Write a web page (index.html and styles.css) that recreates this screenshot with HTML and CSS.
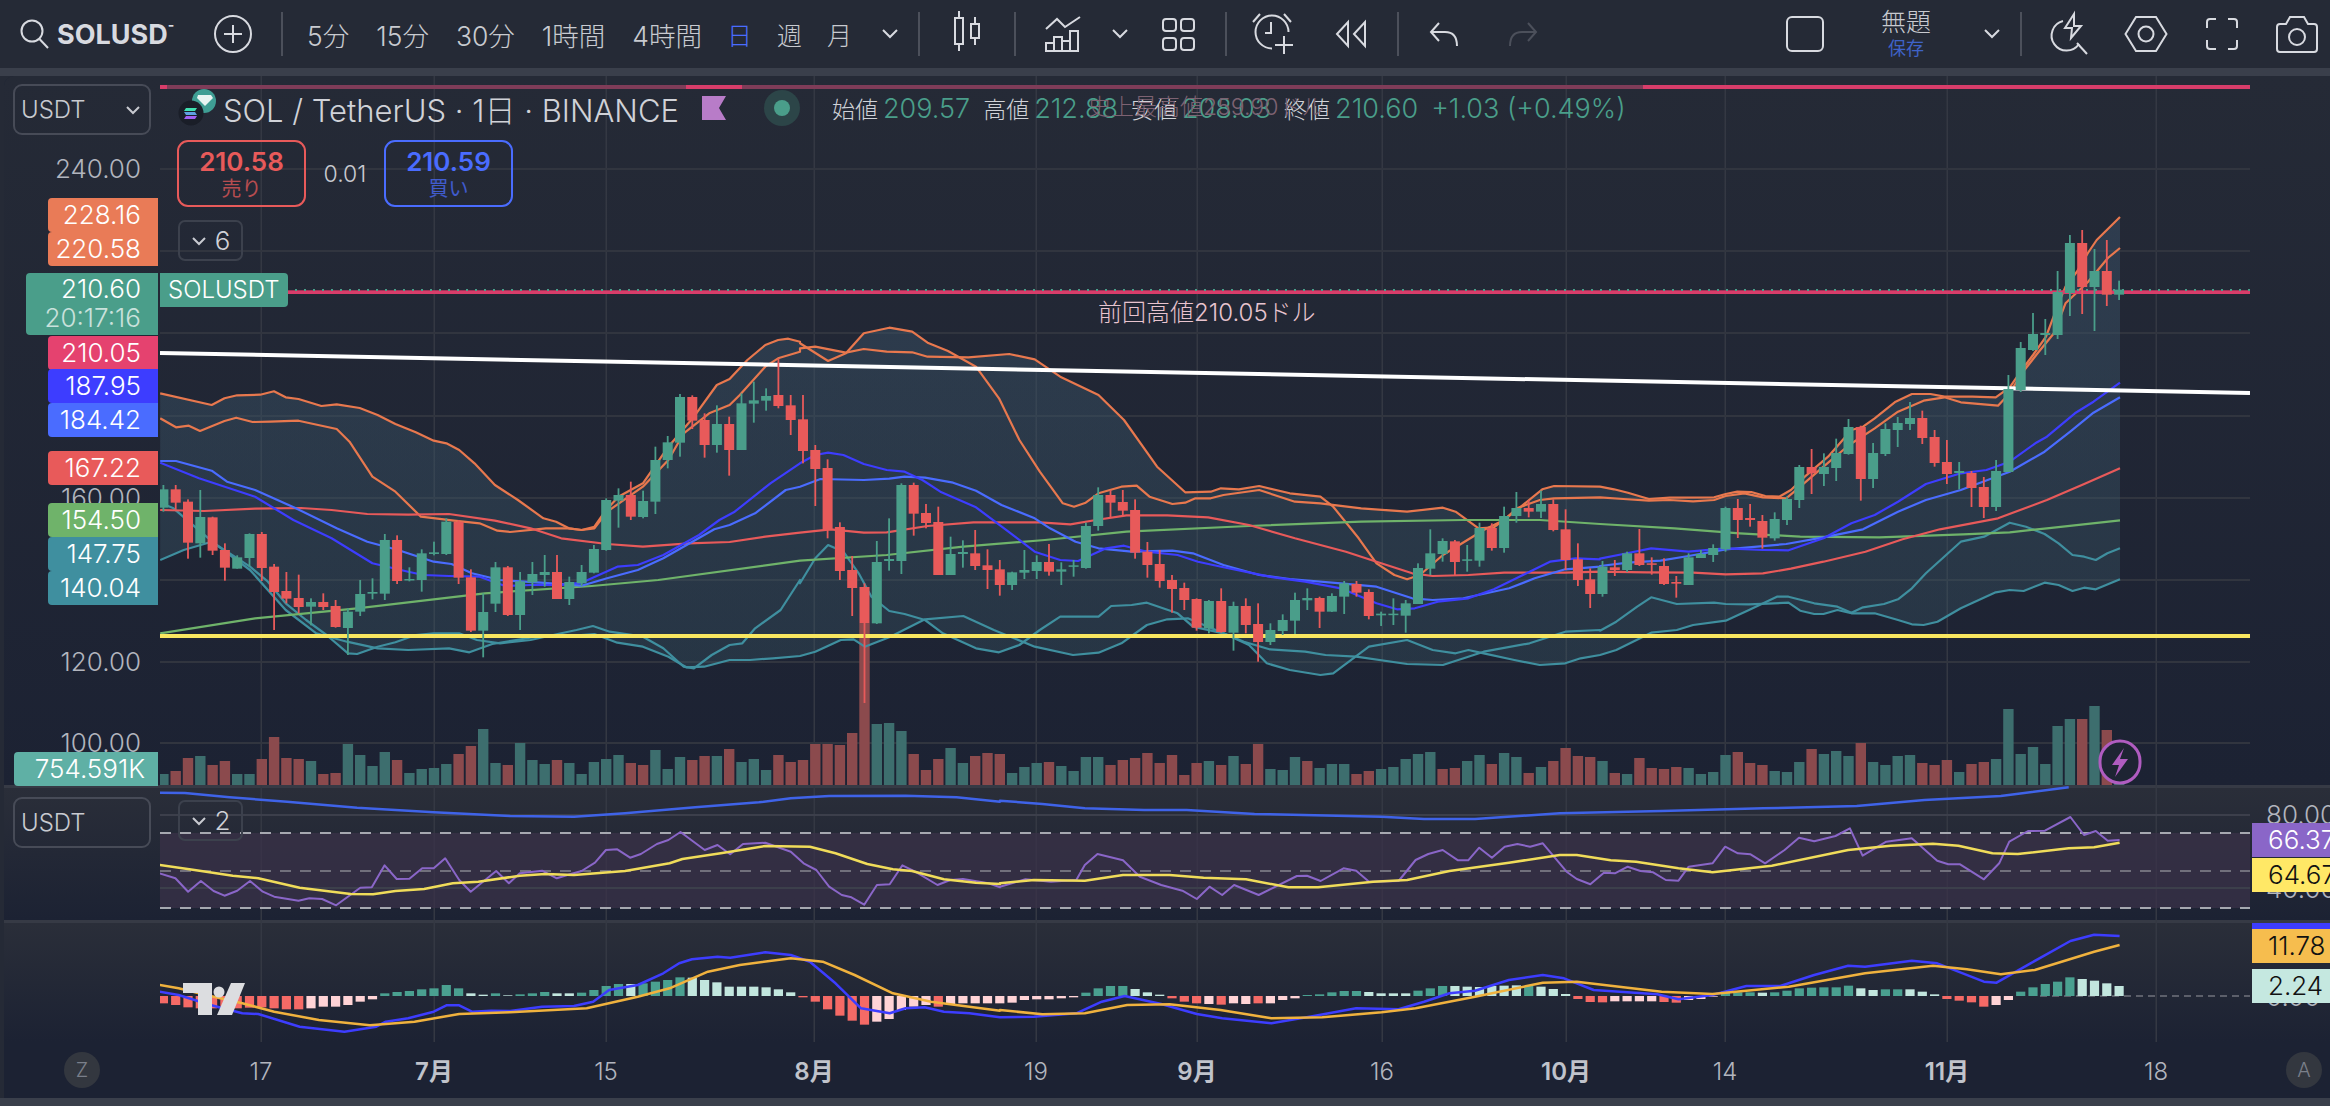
FILE: index.html
```html
<!DOCTYPE html>
<html lang="ja">
<head>
<meta charset="utf-8">
<title>SOLUSD</title>
<link rel="stylesheet" href="styles.css">
</head>
<body>
<div class="app">
  <header class="toolbar">
    <svg class="ico m-20" width="30" height="34" viewBox="0 0 30 34"><circle cx="12" cy="14" r="10.5"/><path d="M19.5 22 L28 31"/></svg>
    <div class="symbol">SOLUSD<span class="sup">-</span></div>
    <svg class="ico m-38" width="38" height="38" viewBox="0 0 38 38"><circle cx="19" cy="19" r="18"/><path d="M19 10V28M10 19H28"/></svg>
    <span class="divider m-29"></span>
    <nav class="intervals">
      <span>5分</span><span>15分</span><span>30分</span><span>1時間</span><span>4時間</span><span class="single active">日</span><span class="single">週</span><span class="single">月</span>
    </nav>
    <svg class="ico chev m-28" width="20" height="12" viewBox="0 0 20 12"><path d="M3 2 L10 9 L17 2"/></svg>
    <span class="divider m-18"></span>
    <svg class="ico m-30" width="36" height="50" viewBox="0 0 36 50"><path d="M9 2V9M9 35V42M25 8V15M25 29V36"/><rect x="5" y="9" width="8" height="26"/><rect x="21" y="15" width="8" height="14"/></svg>
    <span class="divider m-28"></span>
    <svg class="ico m-29" width="37" height="40" viewBox="0 0 37 40"><path d="M1 15L12 5L20 13L35 3"/><path d="M1 37V29H9V37ZM9 37V23H17V37ZM17 37V27H25V37ZM25 37V17H33V37Z"/></svg>
    <svg class="ico chev m-28" width="20" height="12" viewBox="0 0 20 12"><path d="M3 2 L10 9 L17 2"/></svg>
    <svg class="ico m-32" width="33" height="33" viewBox="0 0 33 33"><rect x="1" y="1" width="13" height="12" rx="3"/><rect x="19" y="1" width="13" height="12" rx="3"/><rect x="1" y="20" width="13" height="12" rx="3"/><rect x="19" y="20" width="13" height="12" rx="3"/></svg>
    <span class="divider m-30"></span>
    <svg class="ico m-24" width="44" height="48" viewBox="0 0 44 48"><path d="M21 38.5A16.5 16.5 0 1 1 37.5 22"/><path d="M20 12V23H14"/><path d="M33 26V44M24 35H42"/><path d="M2 12L9 4M33 4L40 12"/></svg>
    <svg class="ico m-41" width="30" height="26" viewBox="0 0 30 26"><path d="M1 13L12 1V25ZM18 13L29 1V25Z"/></svg>
    <span class="divider m-31"></span>
    <svg class="ico m-30" width="30" height="26" viewBox="0 0 30 26"><path d="M10 2L2 11L10 20"/><path d="M2 11H16Q28 11 28 25"/></svg>
    <svg class="ico dim m-49" width="30" height="26" viewBox="0 0 30 26"><path d="M20 2L28 11L20 20"/><path d="M28 11H14Q2 11 2 25"/></svg>

    <div class="toolbar-right">
      <svg class="ico" width="38" height="36" viewBox="0 0 38 36"><rect x="1" y="1" width="36" height="34" rx="5"/></svg>
      <div class="layout-name"><span class="layout-title">無題</span><span class="layout-save">保存</span></div>
      <svg class="ico chev m-40" width="20" height="12" viewBox="0 0 20 12"><path d="M3 2 L10 9 L17 2"/></svg>
      <span class="divider m-18"></span>
      <svg class="ico m-28" width="38" height="46" viewBox="0 0 38 46"><path d="M24 3L15 17H22L21 27L31 15H24Z"/><path d="M13 10A15 15 0 1 0 29 33"/><path d="M27 32L37 43"/></svg>
      <svg class="ico m-36" width="44" height="40" viewBox="0 0 44 40"><path d="M1.5 20L12 3H32L42.5 20L32 37H12Z"/><circle cx="22" cy="20" r="7.5"/></svg>
      <svg class="ico m-38" width="32" height="32" viewBox="0 0 32 32"><path d="M1 10V4Q1 1 4 1H10M22 1H28Q31 1 31 4V10M31 22V28Q31 31 28 31H22M10 31H4Q1 31 1 28V22"/></svg>
      <svg class="ico m-38" width="42" height="40" viewBox="0 0 42 40"><path d="M1 13a3 3 0 0 1 3-3H10L14 3H28L32 10H38a3 3 0 0 1 3 3V35a3 3 0 0 1-3 3H4a3 3 0 0 1-3-3Z"/><circle cx="21" cy="23" r="8"/></svg>
    </div>
  </header>

  <div class="band"></div>

  <main class="chart" id="chart">
    <section class="pane pane-main">
      <div class="axis-cell">
        <div class="select">USDT<svg class="sel-chev" width="16" height="10" viewBox="0 0 16 10"><path d="M2 2L8 8L14 2"/></svg></div>
      </div>
      <div class="plot-cell">
        <div class="legend">
          <div class="logo">
            <svg width="40" height="38" viewBox="0 0 40 38">
              <circle cx="26" cy="12" r="12" fill="#3f9e94"/>
              <path d="M20 6H33L35 9L27 17L19 9Z" fill="#e8f4f2"/>
              <circle cx="13" cy="24" r="12.5" fill="#1a1e28"/>
              <path d="M8 19H19L17 22H6Z" fill="#3fe0b0"/>
              <path d="M6 23H17L19 26H8Z" fill="#5fa0e0"/>
              <path d="M8 27H19L17 30H6Z" fill="#a060f0"/>
            </svg>
          </div>
          <span class="title">SOL / TetherUS · 1日 · BINANCE</span>
          <svg class="flag" width="24" height="24" viewBox="0 0 24 24"><path d="M0 0H24L17 12L24 24H0Z"/></svg>
          <svg class="pulse" width="36" height="36" viewBox="0 0 36 36"><circle cx="18" cy="18" r="18" fill="#2c4548"/><circle cx="18" cy="18" r="8" fill="#4a9e8a"/></svg>
          <div class="ohlc">
            <span class="lbl">始値</span><span class="val">209.57</span>
            <span class="lbl">高値</span><span class="val">212.88</span>
            <span class="lbl">安値</span><span class="val">208.03</span>
            <span class="lbl">終値</span><span class="val">210.60</span>
            <span class="val">+1.03 (+0.49%)</span>
          </div>
          <span class="ghost">史上最高値259.90ドル</span>
        </div>
        <div class="orders">
          <div class="order sell"><b>210.58</b><span>売り</span></div>
          <span class="spread">0.01</span>
          <div class="order buy"><b>210.59</b><span>買い</span></div>
        </div>
        <div class="collapse"><svg width="16" height="10" viewBox="0 0 16 10"><path d="M2 2L8 8L14 2"/></svg>6</div>
      </div>
      <div class="right-cell"></div>
    </section>

    <section class="pane pane-rsi">
      <div class="axis-cell">
        <div class="select">USDT</div>
      </div>
      <div class="plot-cell">
        <div class="collapse"><svg width="16" height="10" viewBox="0 0 16 10"><path d="M2 2L8 8L14 2"/></svg>2</div>
      </div>
      <div class="right-cell"></div>
    </section>

    <section class="pane pane-macd">
      <div class="axis-cell"></div>
      <div class="plot-cell"></div>
      <div class="right-cell"></div>
    </section>

    <footer class="time-axis">
      <span class="badge">Z</span>
      <span class="badge">A</span>
    </footer>

    <svg class="canvas" id="canvas" width="2090" height="966" viewBox="160 76 2090 966"></svg>
    <div class="overlay" id="overlay"></div>
  </main>

  <div class="band"></div>
</div>
<script src="chart.js"></script>
</body>
</html>
```
FILE: styles.css
```css
* { box-sizing: border-box; }
html, body { margin: 0; padding: 0; }
body {
  background: #252a36;
  color: #d8dae0;
  font-family: Inter, "Noto Sans CJK JP", sans-serif;
  overflow: hidden;
}
.app { width: 2330px; height: 1106px; display: flex; flex-direction: column; }

/* Toolbar */
.toolbar { height: 68px; display: flex; align-items: center; padding-right: 12px; background: #252a36; flex: none; }
.ico { fill: none; stroke: #d8dae0; stroke-width: 2; flex: none; overflow: visible; }
.ico.dim { stroke: #4c505b; }
.m-18 { margin-left: 18px; }
.m-20 { margin-left: 20px; }
.m-24 { margin-left: 24px; }
.m-28 { margin-left: 28px; }
.m-29 { margin-left: 29px; }
.m-30 { margin-left: 30px; }
.m-31 { margin-left: 31px; }
.m-32 { margin-left: 32px; }
.m-36 { margin-left: 36px; }
.m-38 { margin-left: 38px; }
.m-40 { margin-left: 40px; }
.m-41 { margin-left: 41px; }
.m-49 { margin-left: 49px; }
.symbol { margin-left: 7px; font-size: 27px; font-weight: 700; color: #d8dae0; width: 119px; white-space: nowrap; display: flex; align-items: flex-start; }
.sup { font-size: 14px; line-height: 14px; }
.divider { width: 2px; height: 44px; background: #4c505b; flex: none; }
.intervals { margin-left: 24px; width: 545px; display: flex; align-items: center; gap: 27px; font-size: 26.5px; color: #c8cad0; white-space: nowrap; font-weight: 300; }
.intervals .single { font-size: 25px; margin-left: -2px; }
.intervals .active { color: #4a6cff; }
.toolbar-right { margin-left: auto; display: flex; align-items: center; }
.layout-name { width: 72px; margin-left: 46px; display: flex; flex-direction: column; align-items: center; color: #c8cad0; }
.layout-title { font-size: 25px; line-height: 30px; font-weight: 300; }
.layout-save { font-size: 18px; line-height: 24px; color: #3f63c8; }

.band { height: 8px; background: #3a3f4b; flex: none; }

/* Chart */
.chart {
  position: relative;
  height: 1022px;
  margin-left: 4px;
  border-top-left-radius: 10px;
  overflow: hidden;
  background: #1c2233;
  flex: none;
}
.pane { display: grid; grid-template-columns: 156px 2090px 80px; }
.pane-main { height: 712px; background: linear-gradient(#252a36, #1c2233); border-bottom: 3px solid #363a45; }
.pane-rsi { height: 135px; background: linear-gradient(#2a2e39, #1c2233); border-bottom: 3px solid #363a45; }
.pane-macd { height: 119px; background: linear-gradient(#2a2e39, #1c2233); }
.axis-cell { padding: 8px 0 0 9px; }
.pane-rsi .axis-cell { padding-top: 9px; }
.select { width: 138px; height: 51px; border: 2px solid #474b57; border-radius: 9px; display: flex; align-items: center; justify-content: space-between; padding: 0 8px 0 6px; font-size: 24px; color: #c8cad0; font-weight: 300; }
.sel-chev, .collapse svg { fill: none; stroke: #c8cad0; stroke-width: 2; }
.plot-cell { position: relative; z-index: 2; padding: 14px 0 0 18px; }
.pane-rsi .plot-cell { padding-top: 12px; }

.legend { position: relative; height: 36px; display: flex; align-items: center; white-space: nowrap; }
.logo { width: 45px; height: 38px; flex: none; }
.title { font-size: 31px; color: #d0d2d8; font-weight: 300; width: 479px; flex: none; }
.flag { fill: #b87cc8; flex: none; }
.pulse { margin-left: 38px; flex: none; }
.ohlc { margin-left: 32px; display: flex; align-items: center; }
.lbl { font-size: 23px; color: #d0d2d8; font-weight: 300; margin-right: 5px; }
.val { font-size: 27px; color: #4a9e8a; margin-right: 13px; font-weight: 300; }
.ghost { position: absolute; left: 910px; top: -2px; font-size: 23px; color: #7d6272; font-weight: 300; }

.orders { margin-top: 14px; display: flex; align-items: center; height: 67px; }
.order { width: 129px; height: 67px; border: 2px solid; border-radius: 11px; display: flex; flex-direction: column; align-items: center; justify-content: center; }
.order b { font-size: 26px; line-height: 30px; font-weight: 600; }
.order span { font-size: 20px; line-height: 24px; opacity: .75; }
.sell { border-color: #e85a5a; color: #e85a5a; margin-left: -1px; }
.buy { border-color: #4a6cff; color: #4a6cff; }
.spread { width: 78px; text-align: center; font-size: 23px; color: #c8cad0; font-weight: 300; }
.collapse { width: 65px; height: 41px; margin-top: 13px; border: 2px solid #3c414d; border-radius: 7px; display: flex; align-items: center; justify-content: center; gap: 8px; font-size: 26px; color: #d0d2d8; font-weight: 300; }
.pane-rsi .collapse { margin-top: 0; }

.time-axis { height: 56px; display: flex; align-items: center; justify-content: space-between; padding: 0 8px 0 60px; }
.badge { width: 36px; height: 36px; border-radius: 50%; background: #33373f; color: #7a7f8a; font-size: 20px; display: flex; align-items: center; justify-content: center; font-weight: 300; }

.canvas { position: absolute; left: 156px; top: 0; overflow: hidden; z-index: 1; }
.overlay { position: absolute; left: 0; top: 0; width: 0; height: 0; z-index: 3; }

.ax, .tag, .time, .note { position: absolute; white-space: nowrap; font-size: 26px; font-weight: 300; }
.ax { color: #b2b5be; transform: translateY(-50%); line-height: 28px; }
.ax.left { width: 137px; text-align: right; left: 0; }
.ax.right { left: 2262px; }
.tag { height: 34px; line-height: 34px; color: #fff; padding-right: 17px; text-align: right; border-radius: 4px 0 0 4px; font-weight: 300; }
.tag.l { left: 44px; width: 110px; }
.tag.r { left: 2248px; width: 82px; padding: 0 0 0 16px; text-align: left; border-radius: 0; }
.tag.k { color: #111; }
.c-orange { background: #e97b57; }
.c-pink { background: #e5426f; }
.c-deep { background: #3d3dff; }
.c-blue { background: #4a6cff; }
.c-red { background: #e85a5a; }
.c-green { background: #6fb36a; }
.c-teal { background: #3f8f9f; }
.c-vol { background: #5fb0a5; }
.c-purple { background: #8a66c8; }
.c-yellow { background: #ffe866; }
.c-amber { background: #f6bd4e; }
.c-mint { background: #c5e8e0; }
.price { position: absolute; left: 22px; top: 197px; width: 132px; height: 62px; background: #4a9e8a; border-radius: 4px 0 0 4px; color: #fff; text-align: right; padding: 1px 17px 0 0; font-size: 26px; line-height: 29px; font-weight: 300; white-space: nowrap; }
.price span { display: block; opacity: .7; font-size: 26px; }
.sym { position: absolute; left: 156px; top: 197px; width: 128px; height: 34px; line-height: 34px; background: #4a9e8a; border-radius: 0 4px 4px 0; color: #fff; font-size: 24px; padding-left: 8px; font-weight: 300; }
.note { left: 1094px; top: 224px; width: 210px; text-align: center; color: #e8c4cf; font-size: 24px; line-height: 26px; }
.time { top: 981px; transform: translateX(-50%); color: #b2b5be; line-height: 30px; font-size: 24px; }
.time.bold { font-weight: 600; color: #c0c3cb; }
```
FILE: chart.js
```js
(function () {
  var NS = 'http://www.w3.org/2000/svg';
  var svg = document.getElementById('canvas');
  var overlay = document.getElementById('overlay');
  var X0 = 163.4, STEP = 12.3;

  function el(tag, attrs, parent) {
    var n = document.createElementNS(NS, tag);
    for (var k in attrs) n.setAttribute(k, attrs[k]);
    (parent || svg).appendChild(n);
    return n;
  }
  /* zoom-space readings -> page pixels */
  function conv(arr, ox, sx, oy) {
    var out = [];
    for (var i = 0; i < arr.length; i += 2) out.push([ox + arr[i] / sx, oy + arr[i + 1] / 3]);
    return out;
  }
  function main(a, b, c) {
    return conv(a, 0, 1.96, 280).concat(conv(b, 800, 1.96, 280), conv(c, 1600, 2.148, 280));
  }
  function sub(a, b) {
    return conv(a, 0, 1.568, 680).concat(conv(b, 1000, 1.179, 680));
  }
  function pts(p) { return p.map(function (q) { return q[0].toFixed(1) + ',' + q[1].toFixed(1); }).join(' '); }
  function line(p, color, w, op) {
    el('polyline', { points: pts(p), fill: 'none', stroke: color, 'stroke-width': w, 'stroke-linejoin': 'round', opacity: op || 1 });
  }

  /* Vertical grid */
  var VX = [261, 434, 606, 814, 1036, 1197, 1382, 1566, 1725, 1947, 2156];
  VX.forEach(function (x) { el('rect', { x: x - 0.5, y: 76, width: 1.5, height: 966, fill: '#343843' }); });
  [169, 251, 333, 416, 498, 580, 662, 743].forEach(function (y) { el('rect', { x: 160, y: y - 1, width: 2090, height: 2, fill: '#31353f' }); });

  /* Bollinger / EMA lines */
  var O1 = main(
    [314,340,415,375,440,355,465,346,510,344,537,334,560,352,585,357,630,378,660,373,705,384,740,405,775,432,815,457,850,482,875,490,900,510,930,550,970,615,1015,660,1065,715,1090,725,1115,745,1140,750,1165,740,1188,690,1212,650,1260,610,1310,500,1360,410,1405,315,1430,297,1465,240,1500,195,1525,180,1545,176,1568,185],
    [0,190,55,243,90,220,125,160,175,143,220,155,250,188,290,213,345,260,390,355,430,480,470,575,515,670,537,680,560,668,585,640,630,620,660,617,685,650,730,672,755,668,775,655,805,655,830,645,900,630,970,665,1020,670,1100,685,1190,695,1260,683,1285,695,1330,745,1360,742,1405,690,1455,628,1478,618,1568,620],
    [0,620,30,628,60,638,105,657,150,653,245,652,270,642,295,635,325,636,355,648,385,650,410,630,440,590,490,530,540,450,565,440,590,415,635,365,670,342,710,342,740,350,800,350,850,352,880,322,906,270,930,225,958,170,985,70,1000,20,1024,-24,1048,-81,1067,-120,1117,-189]);
  var O2 = main(
    [314,415,345,442,370,437,392,453,440,423,463,413,495,426,530,425,585,422,660,447,685,485,730,590,775,635,825,710,890,722,940,730,975,752,1000,756,1070,745,1115,745,1140,750,1165,745,1190,695,1260,620,1310,540,1340,460,1390,400,1430,375,1450,345,1500,260,1525,235,1568,215],
    [0,205,30,200,90,218,125,207,170,215,220,217,250,230,330,232,410,222,460,238,510,290,585,345,635,420,700,560,755,637,805,635,825,625,860,628,900,618,960,640,1020,650,1045,680,1095,775,1130,850,1165,885,1190,898,1215,885,1260,825,1340,750,1380,720,1405,685,1450,660,1478,655,1568,652],
    [0,652,50,657,105,662,150,660,200,664,245,660,270,648,310,640,350,652,400,655,430,620,480,560,535,495,590,445,640,395,695,362,740,352,775,367,855,377,880,340,906,280,940,220,975,160,1000,70,1014,51,1048,6,1091,-66,1117,-96]);
  var L1 = main(
    [314,840,360,810,415,785,460,830,490,860,525,905,560,970,600,1020,640,1065,682,1120,700,1122,740,1100,775,1087,815,1065,850,1060,900,1060,935,1080,980,1090,1040,1080,1100,1060,1130,1050,1162,1038,1195,1055,1260,1070,1300,1105,1340,1160,1360,1165,1395,1125,1430,1095,1455,1090,1480,1045,1530,990,1568,900],
    [0,910,30,835,55,795,85,815,115,880,140,950,175,993,205,1002,245,1020,280,1060,345,1105,390,1117,430,1095,470,1050,510,1010,585,1010,610,978,650,975,680,968,740,1000,770,1040,830,1060,880,1095,915,1150,960,1170,1020,1185,1045,1180,1115,1100,1190,1080,1240,1110,1285,1120,1310,1110,1340,1120,1400,1140,1450,1155,1500,1150,1530,1135,1568,1125],
    [0,1125,35,1110,110,1058,165,1050,200,1035,270,1022,320,990,380,950,405,950,460,970,510,980,540,998,565,982,610,972,640,958,670,925,700,880,775,785,825,770,880,728,915,740,955,762,985,790,1015,825,1040,830,1065,840,1090,820,1117,805]);
  var L2 = main(
    [314,668,340,685,420,790,490,870,560,990,620,1060,680,1085,740,1105,800,1110,880,1105,920,1117,965,1092,1060,1068,1100,1070,1165,1062,1210,1088,1260,1100,1310,1130,1345,1162,1380,1160,1430,1140,1470,1140,1515,1135,1568,1128],
    [0,1128,30,1115,80,1080,105,1078,127,1100,175,1072,245,1018,320,1008,380,1050,460,1100,535,1125,585,1118,630,1090,680,1035,720,1018,760,1015,830,1060,870,1085,920,1108,990,1115,1030,1125,1090,1130,1190,1152,1260,1155,1340,1115,1430,1090,1500,1055,1568,1050],
    [0,1052,35,1025,80,980,110,952,165,972,245,968,270,972,320,973,405,968,430,992,460,1002,480,1002,510,990,540,1000,590,1000,640,1020,670,1033,695,1035,725,1025,775,985,850,937,880,930,910,933,955,908,985,915,1015,933,1040,923,1065,928,1117,898]);
  var BD = main(
    [314,548,390,595,500,650,575,720,650,775,730,850,800,875,830,885,880,888,940,890,990,918,1040,915,1100,915,1140,908,1210,860,1250,855,1300,825,1370,765,1410,720,1440,695,1510,610,1568,550],
    [0,550,30,525,55,518,85,525,125,552,170,570,205,575,240,600,275,635,345,682,400,745,460,815,510,840,545,843,600,805,635,797,680,815,740,825,780,845,830,862,920,890,990,905,1060,925,1130,970,1170,988,1205,985,1250,965,1310,955,1360,928,1430,875,1470,845,1520,835,1568,838],
    [0,836,50,822,110,805,190,815,270,805,350,810,405,811,480,775,540,730,590,705,640,665,700,612,775,580,830,570,880,545,935,490,960,470,1020,400,1060,365,1117,308]);
  var BL = main(
    [314,543,345,543,415,572,445,605,500,630,580,685,660,745,720,785,780,810,850,845,885,852,925,880,980,900,1060,908,1140,917,1190,895,1250,870,1300,835,1400,748,1430,735,1480,700,1540,630,1568,620],
    [0,620,40,597,125,600,175,596,205,590,245,593,300,608,345,632,395,675,460,715,490,745,540,785,585,805,650,815,730,812,770,820,830,855,900,885,960,897,1060,910,1130,920,1200,955,1240,960,1300,955,1390,925,1440,895,1500,868,1568,860],
    [0,858,60,848,130,842,190,828,270,808,400,792,480,772,565,748,640,695,700,660,775,630,880,575,955,515,1010,455,1060,398,1117,352]);
  var RE = main(
    [314,690,400,693,500,686,590,684,650,690,720,702,800,704,880,702,970,722,1040,745,1100,775,1190,792,1260,800,1350,790,1430,786,1500,770,1568,758],
    [0,758,60,748,125,758,170,757,250,738,340,727,470,727,530,733,580,720,640,706,720,706,800,712,880,735,970,775,1070,815,1130,845,1200,880,1240,888,1310,885,1380,878,1500,878,1568,875],
    [0,875,100,877,200,878,270,883,350,880,410,866,480,845,570,815,650,778,730,748,855,715,960,660,1040,612,1117,565]);
  var GR = main(
    [314,1060,500,1015,700,985,950,940,1160,918,1290,900,1568,842],
    [0,842,170,825,320,800,480,780,640,755,880,738,1100,725,1300,720,1450,720,1568,732],
    [0,732,160,745,300,760,430,770,600,772,780,763,880,757,960,745,1117,721]);

  /* Band fill */
  var defs = el('defs', {});
  var g = el('linearGradient', { id: 'bandFill', x1: 0, y1: 0, x2: 0, y2: 1 }, defs);
  el('stop', { offset: 0, 'stop-color': '#3a5068', 'stop-opacity': 0.5 }, g);
  el('stop', { offset: 1, 'stop-color': '#3a5a68', 'stop-opacity': 0.32 }, g);
  function closed(a, b) { return 'M' + pts(a).replace(/ /g, 'L') + 'L' + pts(b.slice().reverse()).replace(/ /g, 'L') + 'Z'; }
  el('path', { d: closed(O1, L1) + closed(O2, L2), fill: 'url(#bandFill)', 'fill-rule': 'nonzero' });

  /* RSI band */
  el('rect', { x: 160, y: 833, width: 2090, height: 75, fill: '#3a3148', opacity: 0.75 });
  [815, 888].forEach(function (y) { el('rect', { x: 160, y: y - 1, width: 2090, height: 2, fill: '#3c3f4b' }); });
  [[833, '#a6a8b0', 2], [871, '#71707c', 2], [908, '#a6a8b0', 2]].forEach(function (d) {
    el('line', { x1: 160, x2: 2250, y1: d[0], y2: d[0], stroke: d[1], 'stroke-width': d[2], 'stroke-dasharray': '11 9' });
  });
  el('line', { x1: 2040, x2: 2250, y1: 996, y2: 996, stroke: '#5c5f6a', 'stroke-width': 2, 'stroke-dasharray': '7 5' });

  /* Volume */
  var VOL = 'g282 r273 r234 g228 r255 r243 g282 g282 r237 r171 r234 r237 g243 r282 r279 g192 g225 g258 g216 r240 g279 g267 g264 g252 r222 r198 g147 g249 r255 g189 g240 g252 r240 g249 g282 g246 g237 g225 r249 r255 g210 g267 g231 r240 r228 g228 r207 g246 g237 g270 r225 r246 r240 r192 r192 r195 r159 r-171 g132 g129 g153 r222 r270 r237 g204 g249 r228 r219 r222 ' +
    'g279 g261 g249 r246 g258 g273 g231 g231 r255 r240 r234 r219 r249 r225 r285 r249 g243 r255 g228 r252 r192 g267 g270 g231 r243 g264 g252 ' +
    'g252 r282 r273 g267 g261 g237 g222 g216 r267 r264 g243 g225 r252 g219 g231 r279 g261 r243 r204 r228 r231 g243 r279 g282 r234 r264 r267 r261 g264 g282 g276 g225 r216 r249 r255 g273 g276 g246 r207 g222 g213 g228 r189 g246 g255 g228 g225 r249 r255 r240 g276 r252 r246 g237 g87 g222 g201 g252 g138 g117 r117 g78 r150 g310';
  VOL.split(' ').forEach(function (s, i) {
    var y = 680 + parseInt(s.slice(1), 10) / 3;
    el('rect', { x: X0 + STEP * i - 5.2, y: y, width: 10.4, height: 785 - y, fill: s[0] === 'g' ? '#3d6e6e' : '#8b4a4d' });
  });

  /* Lines */
  [[O1, '#e8784e'], [O2, '#e8784e'], [L1, '#3f8f9f'], [L2, '#3f8f9f'], [GR, '#6fb36a'], [RE, '#e85a5a'], [BL, '#4a6cff'], [BD, '#3d3dff']].forEach(function (d) {
    line(d[0], d[1], 2.2);
  });

  /* Key levels */
  el('line', { x1: 160, y1: 353, x2: 2250, y2: 393, stroke: '#ffffff', 'stroke-width': 4 });
  el('rect', { x: 160, y: 634, width: 2090, height: 4, fill: '#f8e660' });
  el('rect', { x: 160, y: 290.3, width: 2090, height: 3.7, fill: '#d83d6a' });
  el('line', { x1: 160, x2: 2250, y1: 290, y2: 290, stroke: '#4a9e8a', 'stroke-width': 2, 'stroke-dasharray': '2 7' });
  el('rect', { x: 160, y: 85, width: 2090, height: 4, fill: '#7f3c58' });
  el('rect', { x: 160, y: 85, width: 7, height: 4, fill: '#d83d6a' });
  el('rect', { x: 686, y: 85, width: 56, height: 4, fill: '#d83d6a' });
  el('rect', { x: 1643, y: 85, width: 607, height: 4, fill: '#d83d6a' });

  /* Candles: colour, wick high, body top, body bottom, wick low (zoom units) */
  var C = 'g615,628,683,695 r615,628,668,688 r658,665,788,836 g630,711,790,833 r710,712,812,825 r790,810,863,902 g826,832,866,866 g760,762,834,860 r756,762,864,903 r852,860,936,1050 r876,933,956,970 r884,954,981,1000 g955,966,980,1036 r940,966,981,990 r960,978,1041,1043 g985,995,1044,1125 g900,942,995,1008 g895,936,941,958 g762,780,941,960 r766,780,903,912 g862,897,901,904 g808,820,900,935 g785,817,822,826 g715,725,822,825 r720,725,893,912 r868,892,1052,1056 g940,996,1052,1132 g846,862,971,996 r858,862,1005,1008 g876,904,1005,1050 g846,882,907,945 g825,876,885,920 r825,876,957,957 g890,906,957,975 g855,876,910,918 g795,807,878,880 g655,660,810,812 g625,645,662,743 r605,645,710,720 g632,663,711,715 g500,540,665,702 g468,487,540,565 g342,351,488,530 r346,351,422,447 r400,420,495,533 g376,432,495,518 r410,432,510,587 g340,370,510,510 g305,361,371,428 g325,348,362,392 r235,345,378,385 r345,376,420,465 ' +
    'r345,418,513,550 r495,510,567,678 r538,564,747,775 r727,741,873,900 r828,870,924,1008 r910,921,1029,1269 g783,846,1030,1032 g715,837,843,872 g610,615,843,882 r608,615,701,767 r672,699,729,745 r680,726,885,885 g770,822,885,885 g781,816,822,863 r750,820,858,870 r808,856,870,927 r840,868,915,947 g875,877,915,930 g810,870,878,897 g826,846,873,897 r792,846,875,887 g847,868,875,915 g840,856,860,890 g728,738,864,866 g622,645,738,752 r630,645,668,712 r630,666,692,708 r658,690,818,836 r786,815,855,893 r810,852,903,923 r885,900,927,998 r908,924,960,990 r955,957,1043,1052 g960,963,1045,1060 r925,963,1056,1058 g965,978,1058,1112 r955,978,1035,1060 r970,1032,1086,1145 g1030,1050,1086,1095 g1003,1020,1053,1065 g938,960,1022,1062 g925,954,961,990 r950,954,995,1044 g940,948,995,996 g903,910,950,1002 r903,912,938,950 r928,936,1008,1018 g995,1001,1006,1038 g955,1001,1005,1035 g960,970,1007,1058 g850,864,972,972 g748,820,866,885 g775,783,822,845 r780,784,846,885 g795,838,842,875 g728,744,842,860 r730,744,804,812 g680,708,804,818 g636,684,708,728 r660,684,695,712 g632,672,695,714 r658,672,750,754 r688,748,840,870 r790,838,900,918 r865,898,942,984 g843,860,942,950 ' +
    'r840,862,870,888 g815,820,870,876 r747,820,855,858 r832,850,854,884 r835,858,912,915 r888,906,911,953 g820,832,915,915 g810,822,834,834 g793,804,825,846 g680,684,808,815 r657,684,720,774 r672,714,720,740 r705,723,773,806 g697,717,775,782 g650,657,720,735 g555,561,660,684 r507,561,580,642 g520,561,582,618 g476,519,564,603 g417,441,522,524 r437,441,597,662 g489,519,597,624 g430,447,522,528 g411,429,450,501 g366,414,432,450 r392,414,474,492 r450,471,549,560 r480,546,582,612 g546,573,579,628 r573,579,624,681 r591,621,681,714 g540,573,681,693 g285,327,576,576 g186,204,330,336 g99,162,210,213 g117,159,165,225 g-27,36,165,177 g-135,-111,39,108 r-150,-111,21,102 g-93,-27,21,153 r-120,-27,44,78 g2,29,44,60';
  C.split(' ').forEach(function (s, i) {
    var col = s[0] === 'g' ? '#4a9e8a' : '#e85a5a';
    var v = s.slice(1).split(',').map(function (n) { return 280 + parseFloat(n) / 3; });
    var x = X0 + STEP * i;
    el('rect', { x: x - 0.9, y: v[0], width: 1.8, height: v[3] - v[0], fill: col });
    el('rect', { x: x - 5, y: v[1], width: 10, height: Math.max(1.5, v[2] - v[1]), fill: col });
  });

  /* RSI */
  var RB = sub([250,338,290,339,360,352,450,365,560,383,680,397,800,408,900,410,980,400,1090,382,1190,367,1240,355,1300,348,1420,347,1500,352,1568,365],
    [0,362,50,372,100,385,170,390,220,390,300,402,450,410,500,417,560,417,660,400,780,393,900,385,1010,378,1090,360,1180,348,1260,322]);
  var RP = sub([250,580,275,595,295,635,315,603,335,633,352,647,372,632,392,603,412,635,430,650,468,662,485,655,505,657,527,676,565,623,583,622,603,556,622,597,642,596,662,565,680,565,698,535,720,600,738,635,778,573,798,610,815,580,850,572,873,595,895,582,912,573,933,548,950,510,968,508,988,533,1005,522,1030,492,1048,480,1067,456,1105,510,1125,495,1145,523,1165,492,1200,488,1240,515,1260,550,1280,570,1300,620,1320,645,1335,652,1355,674,1375,615,1395,613,1415,556,1435,575,1470,615,1490,600,1510,597,1550,610,1568,622],
    [0,620,30,598,60,605,90,600,100,555,115,522,145,541,165,590,190,615,215,632,232,657,247,620,262,645,276,615,305,645,350,588,362,587,378,603,405,565,420,572,435,605,470,603,490,540,505,522,522,510,540,541,552,541,565,503,580,533,595,500,610,492,625,500,640,490,668,575,680,597,696,613,712,578,725,580,740,560,755,573,770,577,785,600,800,602,812,560,840,550,855,500,870,520,885,523,902,550,925,510,942,473,960,484,985,468,1002,445,1017,527,1045,485,1075,475,1105,542,1118,553,1132,553,1160,598,1178,550,1190,485,1212,453,1232,452,1262,411,1278,465,1292,453,1306,482,1320,480]);
  var RY = sub([250,555,305,570,365,587,405,595,470,623,550,642,585,643,620,633,665,627,710,610,750,605,815,587,855,582,900,585,980,573,1050,550,1070,537,1130,520,1200,498,1270,500,1310,520,1360,552,1400,568,1430,573,1480,598,1530,608,1568,612],
    [0,610,40,600,100,602,145,585,200,585,240,593,290,598,340,622,375,622,440,605,480,600,530,573,600,548,660,525,680,525,720,541,750,545,800,565,840,577,910,557,1000,510,1050,497,1100,491,1130,497,1170,520,1200,522,1260,505,1290,502,1320,488]);
  line(RB, '#3f63e8', 2.5);
  line(RP, '#8a66c8', 2);
  line(RY, '#f0dc5a', 2.5);

  /* MACD histogram */
  var H = '970r 975r 982r 985r 985r 985r 985r 983r 982r 985r 988r 988r 985p 980p 980p 975p 965p 958p 940d 936d 933d 928d 925d 915d 925d 940l 944l 940d 946l 943d 940d 936d 940l 940l 938d 930d 918d 912d 912l 910d 905d 900d 892d 893l 900l 907l 920l 920l 920l 922l 928l 937l 952r 965r 988r 1007r 1022r 1034r 1025p 1017p 990p 980p 975p 980r 975p 970p 970p 970p ' +
    '970p 968p 960p 958p 958p 955p 952p 938d 925d 918d 918d 927l 937l 944l 955r 965r 970r 972p 974r 970p 972p 970r 970p 960p 955p 945d 943d 937d 933d 933d 936l 940l 940l 940l 932d 925d 918d 918l 920l 921l 918l 917l 916l 917d 920l 927l 942l 957r 966r 967r 964p 964p 964p 964p 966r 968r 960p 957p 950p 935d 937d 937d 938l 937d 932d 925d 923d 922d 922d 917d 925l 930l 928d 928d 928l 935l 943l 957r 962r 967r 980r 975p 960p 935d 922d 912d 905d 892d 897l 902l 910l 918l';
  var HC = { d: '#4aa090', l: '#c2e6de', r: '#f56a66', p: '#ffd3d6' };
  var Y0 = 996;
  H.split(' ').forEach(function (s, i) {
    var y = 680 + parseInt(s, 10) / 3, t = s.slice(-1);
    var top = Math.min(y, Y0), h = Math.abs(y - Y0);
    el('rect', { x: X0 + STEP * i - 4.6, y: top, width: 9.2, height: h, fill: HC[t] });
  });
  var MB = sub([250,935,280,945,330,975,380,1000,405,1002,470,1040,540,1055,590,1040,605,1025,640,1015,680,995,700,976,720,976,740,995,770,992,800,993,850,980,900,978,930,965,955,930,1000,915,1040,880,1065,850,1085,838,1125,830,1145,833,1200,817,1240,825,1270,845,1310,910,1350,985,1395,1000,1420,985,1450,982,1480,995,1520,1000,1568,1012],
    [0,1012,40,1010,90,1000,120,965,147,948,190,972,232,1002,262,1015,320,1030,370,1008,420,985,470,988,500,965,530,940,560,932,600,900,640,885,665,895,700,930,775,943,800,958,840,945,880,918,920,918,960,885,1000,857,1020,860,1075,842,1105,850,1160,905,1175,908,1215,850,1262,783,1290,764,1320,768]);
  var MO = sub([250,915,280,925,330,948,380,970,430,995,500,1020,580,1036,650,1025,720,1002,800,997,920,985,1000,950,1050,925,1110,875,1160,855,1240,835,1290,845,1340,885,1400,940,1460,965,1568,992],
    [0,990,50,1003,100,1000,150,975,200,973,260,990,320,1015,380,1012,450,997,490,985,560,950,640,908,680,905,780,935,840,942,930,920,1020,880,1100,857,1140,868,1180,883,1220,870,1290,815,1320,795]);
  line(MB, '#3d3dff', 2.5);
  line(MO, '#f0b23e', 2.5);

  /* TradingView mark */
  el('path', { d: 'M183 983H212V1015H198V993H183Z', fill: '#dcdde0' });
  el('circle', { cx: 219, cy: 992, r: 5.5, fill: '#dcdde0' });
  el('path', { d: 'M231 983H245L232 1015H217Z', fill: '#dcdde0' });

  /* Lightning marker */
  el('rect', { x: 2100, y: 741, width: 40, height: 42, rx: 20, fill: '#1e2433', stroke: '#b05cc0', 'stroke-width': 3 });
  el('path', { d: 'M2124 748L2112 765H2119L2115 777L2128 759H2120Z', fill: '#b05cc0' });

  /* HTML text on the chart (page coordinates minus chart origin 4,76) */
  function div(cls, text, x, y) {
    var d = document.createElement('div');
    d.className = cls;
    d.textContent = text;
    if (x !== null) d.style.left = (x - 4) + 'px';
    if (y !== null) d.style.top = (y - 76) + 'px';
    overlay.appendChild(d);
    return d;
  }
  [['240.00', 169], ['160.00', 498], ['120.00', 662], ['100.00', 743]].forEach(function (a) { div('ax left', a[0], null, a[1]); });
  [['80.00', 815], ['40.00', 889], ['0.00', 997]].forEach(function (a) { div('ax right', a[0], null, a[1]); });

  [['228.16', 198, 'c-orange'], ['220.58', 232, 'c-orange'], ['210.05', 336, 'c-pink'], ['187.95', 369, 'c-deep'], ['184.42', 403, 'c-blue'],
   ['167.22', 451, 'c-red'], ['154.50', 503, 'c-green'], ['147.75', 537, 'c-teal'], ['140.04', 571, 'c-teal']].forEach(function (a) {
    div('tag l ' + a[2], a[0], null, a[1]);
  });
  var v = div('tag c-vol', '754.591K', 14, 752);
  v.style.width = '144px'; v.style.paddingRight = '13px';

  [['66.37', 823, 'c-purple', ''], ['64.67', 858, 'c-yellow', 'k'], ['11.78', 929, 'c-amber', 'k'], ['2.24', 969, 'c-mint', 'k']].forEach(function (a) {
    div('tag r ' + a[2] + ' ' + a[3], a[0], null, a[1]);
  });
  var strip = div('tag r c-deep', '', null, 923); strip.style.height = '6px';

  var price = div('price', '210.60', null, null);
  var cd = document.createElement('span'); cd.textContent = '20:17:16'; price.appendChild(cd);
  div('sym', 'SOLUSDT', null, null);
  div('note', '前回高値210.05ドル', null, null);

  [[261, '17'], [434, '7月', 1], [606, '15'], [814, '8月', 1], [1036, '19'], [1197, '9月', 1], [1382, '16'], [1566, '10月', 1], [1725, '14'], [1947, '11月', 1], [2156, '18']].forEach(function (a) {
    div('time' + (a[2] ? ' bold' : ''), a[1], a[0], null);
  });
})();
```
